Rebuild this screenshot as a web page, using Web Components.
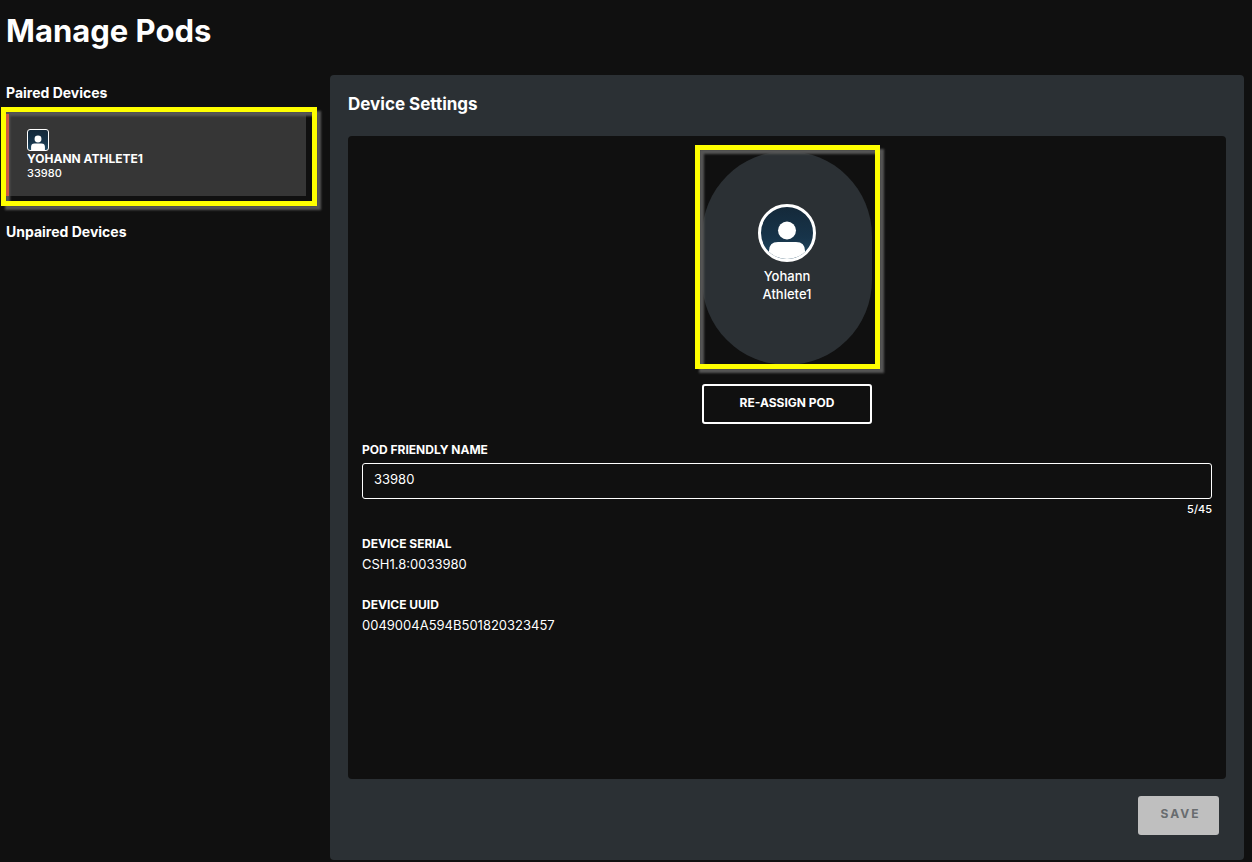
<!DOCTYPE html>
<html lang="en">
<head>
<meta charset="utf-8">
<title>Manage Pods</title>
<style>
  body { margin: 0; background: #101010; color: #fff; font-family: Inter, "Liberation Sans", sans-serif; }
</style>
</head>
<body>
<pods-page>
  <device-list slot="sidebar" heading="Paired Devices">
    <focus-frame class="card">
      <device-card name="Yohann Athlete1" pod="33980"></device-card>
    </focus-frame>
  </device-list>
  <device-list slot="sidebar" heading="Unpaired Devices"></device-list>
  <settings-panel heading="Device Settings">
    <focus-frame class="pod" slot="athlete">
      <athlete-pod>Yohann<br>Athlete1</athlete-pod>
    </focus-frame>
    <name-field label="Pod friendly name" value="33980" max="45"></name-field>
    <info-field label="Device serial">CSH1.8:0033980</info-field>
    <info-field label="Device UUID">0049004A594B501820323457</info-field>
  </settings-panel>
</pods-page>
<script>
class Base extends HTMLElement {
  connectedCallback() {
    if (this.shadowRoot) return;
    this.attachShadow({ mode: 'open' }).innerHTML = `<style>*{box-sizing:border-box}</style>` + this.render();
    this.ready();
  }
  ready() {}
  attr(n) { return this.getAttribute(n) || ''; }
}

customElements.define('pods-page', class extends Base {
  render() { return `
    <style>
      :host { display: flex; flex-direction: column; min-height: 100vh; padding: 0 8px 2px 6px; box-sizing: border-box; }
      h1 { margin: 0; height: 75px; padding-top: 11px; font-size: 31px; line-height: 40px; font-weight: 700; }
      .columns { flex: 1; display: grid; grid-template-columns: 300px minmax(0, 1fr); column-gap: 24px; }
      aside { padding-top: 8px; display: flex; flex-direction: column; gap: 26px; }
      main { display: flex; }
    </style>
    <h1>Manage Pods</h1>
    <div class="columns"><aside><slot name="sidebar"></slot></aside><main><slot></slot></main></div>`; }
});

customElements.define('device-list', class extends Base {
  render() { return `
    <style>
      :host { display: block; }
      h2 { margin: 0 0 8px; font-size: 14px; line-height: 20px; font-weight: 700; }
    </style>
    <h2>${this.attr('heading')}</h2><slot></slot>`; }
});

customElements.define('focus-frame', class extends Base {
  render() { return `
    <style>
      :host { display: block; position: relative; }
      :host::after { content: ""; position: absolute; border: 5px solid #ff0; pointer-events: none;
        filter: drop-shadow(4px 4px 1px #555); }
      :host(.card)::after { inset: -4px -11px -10px -5px; }
      :host(.pod)::after { inset: -6px -8px -4px -7px; }
    </style><slot></slot>`; }
});

customElements.define('athlete-avatar', class extends Base {
  render() { return `
    <style>
      :host { display: block; overflow: hidden; border: 1px solid #fff; background: linear-gradient(#14293a, #17344a 60%, #234c66); }
      :host(.small) { width: 22px; height: 22px; border-radius: 3px; }
      :host(.large) { width: 58px; height: 58px; border-width: 3px; border-radius: 50%; }
      svg { display: block; width: 100%; height: 100%; }
    </style>
    <svg viewBox="0 0 52 52" aria-hidden="true"><g fill="#fff"><circle cx="26" cy="23.500" r="9"/><path d="M8 52v-8q0-9 9-9h18q9 0 9 9v8z"/></g></svg>`; }
});

customElements.define('device-card', class extends Base {
  render() { return `
    <style>
      :host { display: block; background: #363636; padding: 18px 18px 15px 21px; min-height: 85px; box-sizing: border-box; }
      :host::before { content: ""; position: absolute; z-index: 1; left: 0; top: 3px; bottom: 0; width: 3px; background: #d05845; }
      .name { font-size: 12px; line-height: 15px; font-weight: 700; text-transform: uppercase; }
      .pod { font-size: 11px; line-height: 15px; font-weight: 500; }
    </style>
    <athlete-avatar class="small"></athlete-avatar>
    <div class="name">${this.attr('name')}</div><div class="pod">${this.attr('pod')}</div>`; }
});

customElements.define('athlete-pod', class extends Base {
  render() { return `
    <style>
      :host { display: flex; flex-direction: column; align-items: center; gap: 5px; width: 170px; height: 214px; padding-top: 53px;
        box-sizing: border-box; border-radius: 85px; background: #2b3034; }
      .name { font-size: 13px; line-height: 18px; font-weight: 500; text-align: center; }
    </style>
    <athlete-avatar class="large"></athlete-avatar><div class="name"><slot></slot></div>`; }
});

customElements.define('settings-panel', class extends Base {
  render() { return `
    <style>
      :host { flex: 1; display: flex; flex-direction: column; background: #2b3034; border-radius: 4px; padding: 17px 18px 25px; box-sizing: border-box; }
      h2 { margin: 0 0 20px; font-size: 17px; line-height: 24px; font-weight: 700; }
      section { flex: 1; background: #101010; border-radius: 4px; padding: 15px 14px; }
      .assign { display: flex; flex-direction: column; align-items: center; gap: 19px; margin-bottom: 18px; }
      button { font-family: inherit; font-size: 12px; font-weight: 700; border-radius: 3px; padding: 0 0 4px; }
      .reassign { width: 170px; height: 40px; border: 2px solid #fff; background: transparent; color: #fff; }
      .fields { display: flex; flex-direction: column; gap: 20px; }
      footer { display: flex; justify-content: flex-end; margin-top: 17px; padding-right: 7px; }
      .save { width: 81px; height: 39px; border: 0; background: #bfbfbf; color: #686c6f; letter-spacing: 2px; padding-left: 4px; }
    </style>
    <h2>${this.attr('heading')}</h2>
    <section>
      <div class="assign"><slot name="athlete"></slot><button class="reassign" type="button">RE-ASSIGN POD</button></div>
      <div class="fields"><slot></slot></div>
    </section>
    <footer><button class="save" type="button" disabled>SAVE</button></footer>`; }
});

customElements.define('name-field', class extends Base {
  render() { return `
    <style>
      :host { display: block; }
      label { display: block; font-size: 12px; line-height: 16px; font-weight: 700; text-transform: uppercase; margin-bottom: 5px; }
      input { display: block; width: 100%; height: 36px; padding: 0 11px 4px; border: 1px solid #fff; border-radius: 3px; background: transparent;
        color: #fff; font: 400 13px Inter, "Liberation Sans", sans-serif; outline: 0; }
      output { display: block; text-align: right; font-size: 11px; line-height: 14px; font-weight: 500; margin-top: 3px; }
    </style>
    <label for="name">${this.attr('label')}</label>
    <input id="name" type="text" maxlength="${this.attr('max')}" value="${this.attr('value')}">
    <output for="name"></output>`; }
  ready() {
    const input = this.shadowRoot.querySelector('input');
    const count = () => { this.shadowRoot.querySelector('output').textContent = input.value.length + '/' + this.attr('max'); };
    input.addEventListener('input', count);
    count();
  }
});

customElements.define('info-field', class extends Base {
  render() { return `
    <style>
      :host { display: block; padding-bottom: 3px; }
      .label { font-size: 12px; line-height: 16px; font-weight: 700; text-transform: uppercase; margin-bottom: 2px; }
      .value { font-size: 13px; line-height: 20px; font-weight: 400; }
    </style>
    <div class="label">${this.attr('label')}</div><div class="value"><slot></slot></div>`; }
});
</script>
</body>
</html>
